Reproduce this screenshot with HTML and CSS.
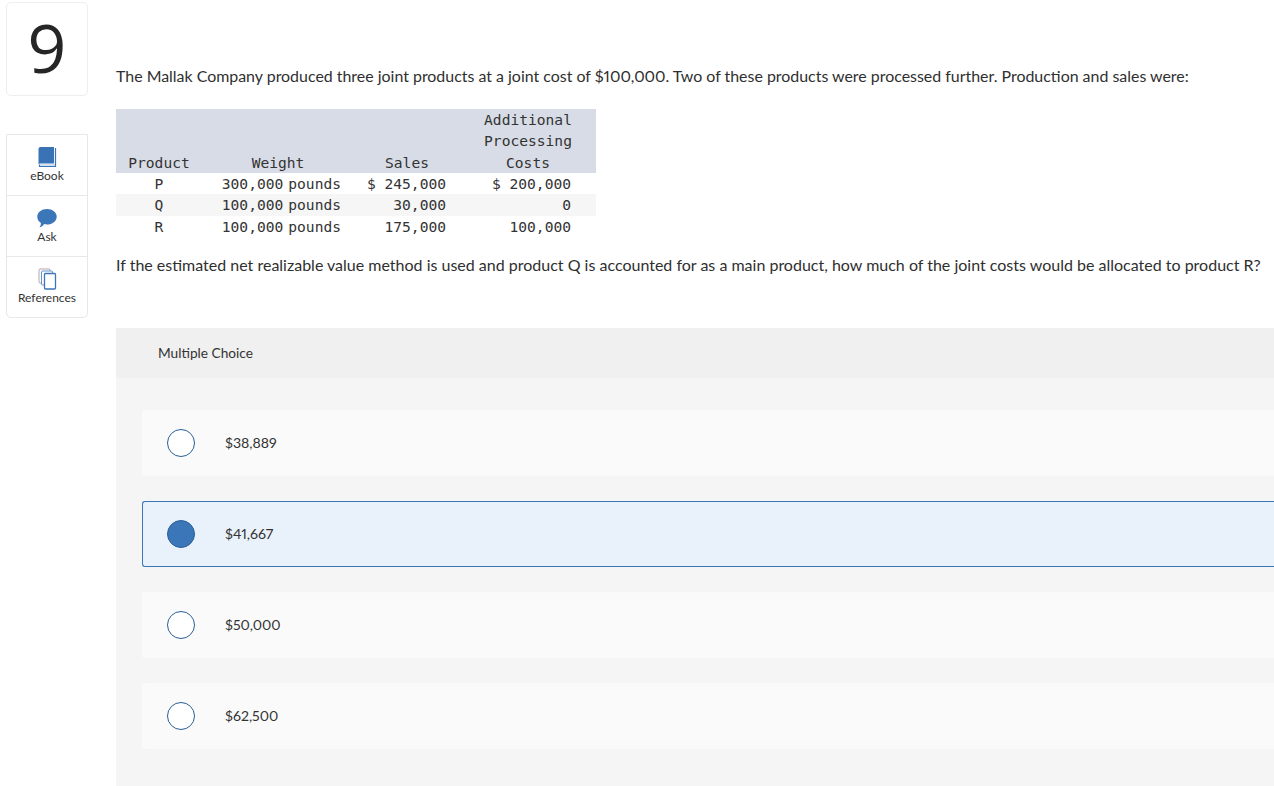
FILE: index.html
```html
<!DOCTYPE html>
<html lang="en">
<head>
<meta charset="utf-8">
<title>Question 9</title>
<link rel="stylesheet" href="styles.css">
</head>
<body>
<div class="page">
  <aside class="side">
    <div class="num">9</div>
    <nav class="tools">
      <div class="tool">
        <svg class="ico" width="20" height="22" viewBox="0 0 20 22"><path d="M2.500 18.500V20.500H18.500V2" fill="#fff" stroke="#3a76b8" stroke-width="1.200"/><path d="M1.500 18.500V3a2 2 0 0 1 2-2h13.500v16.500H3.500a2 2 0 0 0-2 1z" fill="#3a73b5"/><path d="M3 19h15" stroke="#a9c4e2" stroke-width="1"/></svg>
        <span>eBook</span>
      </div>
      <div class="tool">
        <svg class="ico" width="20" height="22" viewBox="0 -1.500 20 22"><path d="M10 .5c5.300 0 9.700 3.300 9.700 7.700S15.300 16 10 16c-1 0-2-.1-2.900-.4C6 17.400 4.300 18.500 2.500 19c.9-1.300 1.400-2.700 1.400-4.500C1.800 13.100.3 10.900.3 8.200.3 3.800 4.700.5 10 .5z" fill="#3a76b8"/></svg>
        <span>Ask</span>
      </div>
      <div class="tool">
        <svg class="ico" width="20" height="22" viewBox="0 0 20 22"><rect x="2" y="1" width="11" height="14" rx="1" fill="#fff" stroke="#b9a3a8"/><rect x="4.500" y="3" width="11" height="14" rx="1" fill="#fff" stroke="#5f93cc"/><rect x="7.500" y="5.500" width="11" height="15.500" rx="1" fill="#fff" stroke="#3a76b8" stroke-width="1.300"/></svg>
        <span>References</span>
      </div>
    </nav>
  </aside>
  <main class="main">
    <p class="lead">The Mallak Company produced three joint products at a joint cost of $100,000. Two of these products were processed further. Production and sales were:</p>
    <table class="data">
      <thead>
        <tr><th class="c1">Product</th><th class="c2">Weight</th><th class="c3">Sales</th><th class="c4">Additional<br>Processing<br>Costs</th></tr>
      </thead>
      <tbody>
        <tr><td class="c1">P</td><td class="c2">300,000 pounds</td><td class="c3">$ 245,000</td><td class="c4">$ 200,000</td></tr>
        <tr class="alt"><td class="c1">Q</td><td class="c2">100,000 pounds</td><td class="c3">30,000</td><td class="c4">0</td></tr>
        <tr><td class="c1">R</td><td class="c2">100,000 pounds</td><td class="c3">175,000</td><td class="c4">100,000</td></tr>
      </tbody>
    </table>
    <p class="ask">If the estimated net realizable value method is used and product Q is accounted for as a main product, how much of the joint costs would be allocated to product R?</p>
    <section class="panel">
      <header class="panel-head">Multiple Choice</header>
      <div class="choices">
        <div class="choice"><span class="radio"></span><span>$38,889</span></div>
        <div class="choice picked"><span class="radio"></span><span>$41,667</span></div>
        <div class="choice"><span class="radio"></span><span>$50,000</span></div>
        <div class="choice"><span class="radio"></span><span>$62,500</span></div>
      </div>
    </section>
  </main>
</div>
</body>
</html>
```
FILE: styles.css
```css
* { box-sizing: border-box; }
html, body { margin: 0; height: 100%; overflow: hidden; background: #fff; }
body { font-family: "Lato", "Open Sans", sans-serif; color: #2d2d2d; font-variant-numeric: proportional-nums; }
.page { display: flex; width: 1274px; height: 786px; }
.side { width: 116px; flex: none; padding: 2px 0 0 6px; }
.num {
  width: 82px; height: 94px; border: 1px solid #eee; border-radius: 5px;
  font-family: "Open Sans", sans-serif;
  font-size: 68px; line-height: 88px; text-align: center; color: #262626;
}
.tools {
  width: 82px; margin-top: 38px; border: 1px solid #e8e8e8; border-radius: 0 0 5px 5px;
}
.tool {
  height: 61px; display: flex; flex-direction: column; align-items: center;
  padding-top: 11px; font-size: 12px; line-height: 14px; color: #333;
  border-bottom: 1px solid #e8e8e8;
}
.tool:last-child { border-bottom: 0; height: 60px; }
.ico { display: block; margin-bottom: 1px; }
.main { flex: 1; min-width: 0; }
.lead, .ask { margin: 0; line-height: 20px; white-space: nowrap; color: #2f2f2f; }
.lead { padding-top: 66px; font-size: 15.930px; }
.ask { margin-top: 18px; font-size: 16px; }
.data {
  margin-top: 23px; width: 480px; border-collapse: collapse; table-layout: fixed;
  font-family: "DejaVu Sans Mono", "Liberation Mono", monospace; font-size: 14.600px; line-height: 21.330px; color: #333;
}
.data th { font-weight: 400; vertical-align: bottom; text-align: center; background: #d8dce6; padding: 0; }
.data td { padding: 0; text-align: right; }
.data .c1 { width: 86px; text-align: center; }
.data .c2 { width: 152px; }
.data .c3 { width: 106px; }
.data .c4 { width: 136px; }
.data td.c2 { padding-right: 13px; word-spacing: -3.800px; }
.data td.c3 { padding-right: 14px; }
.data td.c4 { padding-right: 25px; }
.alt td { background: #f6f6f6; }
.panel { margin-top: 53px; height: 458px; background: #f5f5f5; border-radius: 3px 0 0 0; }
.panel-head { height: 50px; padding-left: 42px; background: #f0f0f0; font-size: 13.700px; line-height: 50px; color: #333; }
.choices { display: flex; flex-direction: column; gap: 25px; padding: 32px 0 0 26px; }
.choice {
  height: 66px; display: flex; align-items: center; gap: 30px; padding-left: 25px;
  background: #fafafa; border-radius: 3px 0 0 3px; font-size: 14.100px; color: #333;
}
.radio { width: 28px; height: 28px; border-radius: 50%; border: 1.500px solid #2a5f96; background: #fff; flex: none; }
.picked { background: #e9f1fa; border: 1px solid #3a76b8; border-right: 0; padding-left: 24px; }
.picked .radio { background: #3a76b8; }
```
